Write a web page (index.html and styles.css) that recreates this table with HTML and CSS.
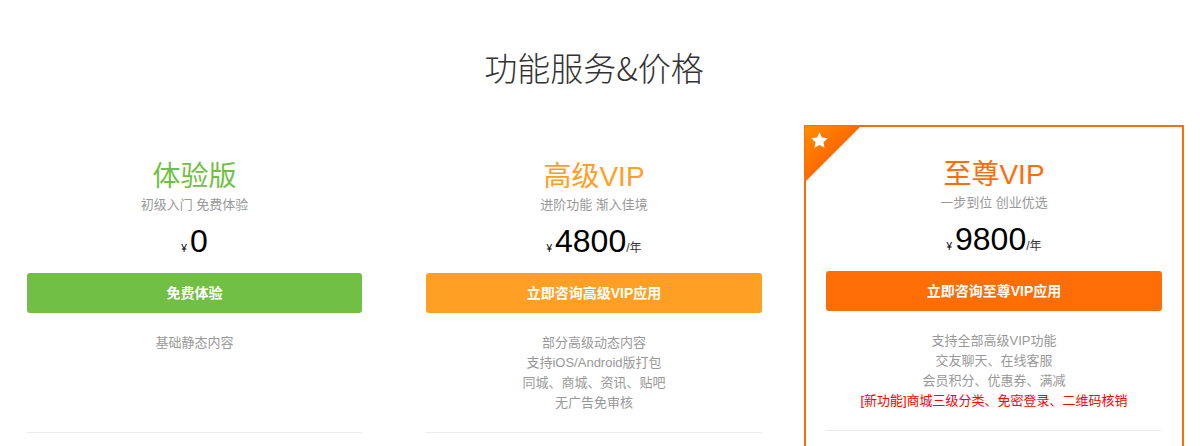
FILE: index.html
```html
<!DOCTYPE html>
<html lang="zh-CN">
<head>
<meta charset="utf-8">
<title>功能服务&amp;价格</title>
<link rel="stylesheet" href="styles.css">
</head>
<body>
<section class="pricing">
  <h1 class="pricing-title">功能服务&amp;价格</h1>
  <div class="plans">
    <div class="plan plan-basic">
      <h2 class="plan-name">体验版</h2>
      <p class="plan-desc">初级入门 免费体验</p>
      <div class="plan-price"><span class="cur">¥</span><span class="num">0</span></div>
      <a class="plan-btn">免费体验</a>
      <ul class="plan-features">
        <li>基础静态内容</li>
      </ul>
    </div>
    <div class="plan plan-vip">
      <h2 class="plan-name">高级VIP</h2>
      <p class="plan-desc">进阶功能 渐入佳境</p>
      <div class="plan-price"><span class="cur">¥</span><span class="num">4800</span><span class="unit">/年</span></div>
      <a class="plan-btn">立即咨询高级VIP应用</a>
      <ul class="plan-features">
        <li>部分高级动态内容</li>
        <li>支持iOS/Android版打包</li>
        <li>同城、商城、资讯、贴吧</li>
        <li>无广告免审核</li>
      </ul>
    </div>
    <div class="plan plan-svip active">
      <span class="ribbon">
        <svg class="ribbon-star" viewBox="0 0 24 24" width="19" height="19"><path d="M12 1.6l3.1 6.6 7.2.9-5.3 5 1.4 7.1L12 17.7l-6.4 3.5 1.4-7.1-5.3-5 7.2-.9z" fill="#fff"/></svg>
      </span>
      <h2 class="plan-name">至尊VIP</h2>
      <p class="plan-desc">一步到位 创业优选</p>
      <div class="plan-price"><span class="cur">¥</span><span class="num">9800</span><span class="unit">/年</span></div>
      <a class="plan-btn">立即咨询至尊VIP应用</a>
      <ul class="plan-features">
        <li>支持全部高级VIP功能</li>
        <li>交友聊天、在线客服</li>
        <li>会员积分、优惠券、满减</li>
        <li class="new">[新功能]商城三级分类、免密登录、二维码核销</li>
      </ul>
    </div>
  </div>
</section>
</body>
</html>
```

FILE: styles.css
```css
html, body {
  margin: 0;
  padding: 0;
  background: #fff;
  overflow: hidden;
}
body {
  font-family: "Liberation Sans", "Noto Sans CJK SC", sans-serif;
  color: #333;
}
.pricing {
  width: 1188px;
}
.pricing-title {
  margin: 0;
  padding-top: 47px;
  font-family: "Noto Sans CJK SC", sans-serif;
  font-size: 33px;
  line-height: 40px;
  font-weight: 300;
  text-align: center;
  color: #333;
}
.plans {
  display: flex;
  gap: 20px;
  margin-top: 38px;
  margin-left: 4px;
  align-items: flex-start;
}
.plan {
  position: relative;
  box-sizing: border-box;
  width: 380px;
  flex: none;
  margin-top: 2px;
  padding: 30px 20px 40px;
  border: 2px solid transparent;
  text-align: center;
}
.plan.active {
  margin-top: 0;
  border-color: #ff6d05;
}
.plan-basic { margin-left: 1px; width: 379px; }
.plan-name {
  margin: 0;
  font-size: 28px;
  line-height: 36px;
  font-weight: normal;
}
.plan-desc {
  margin: 0;
  font-size: 13px;
  line-height: 20px;
  color: #999;
}
.plan-price {
  margin: 10px 0 8px;
  height: 40px;
  line-height: 40px;
  color: #000;
}
.plan-price .cur {
  font-size: 10px;
  line-height: 1;
  margin-right: 3px;
}
.plan-price .num {
  font-size: 32px;
  line-height: 1;
}
.plan-price .unit {
  font-size: 12px;
  line-height: 1;
  color: #333;
}
.plan-btn {
  display: block;
  height: 40px;
  line-height: 40px;
  border-radius: 3px;
  color: #fff;
  font-size: 14px;
  font-weight: bold;
  text-decoration: none;
}
.plan-features {
  list-style: none;
  margin: 0;
  padding: 20px 0 0;
  height: 120px;
  box-sizing: border-box;
  border-bottom: 1px solid #ebebeb;
  font-size: 13px;
  line-height: 20px;
  color: #999;
}
.plan-features .new {
  color: #ff0000;
}
.plan-basic .plan-name { color: #71bf44; }
.plan-basic .plan-btn { background: #71bf44; }
.plan-vip .plan-name { color: #ffa024; }
.plan-vip .plan-btn { background: #ff9f24; }
.plan-svip .plan-name { color: #ff6d05; }
.plan-svip .plan-btn { background: #ff6d05; }
.ribbon {
  position: absolute;
  top: -1px;
  left: -1px;
  width: 56px;
  height: 56px;
  background: linear-gradient(135deg, #ff8e00 0%, #ff6a00 50%, #ff5200 100%);
  clip-path: polygon(0 0, 100% 0, 0 100%);
}
.ribbon-star {
  position: absolute;
  left: 5px;
  top: 5px;
}
```
